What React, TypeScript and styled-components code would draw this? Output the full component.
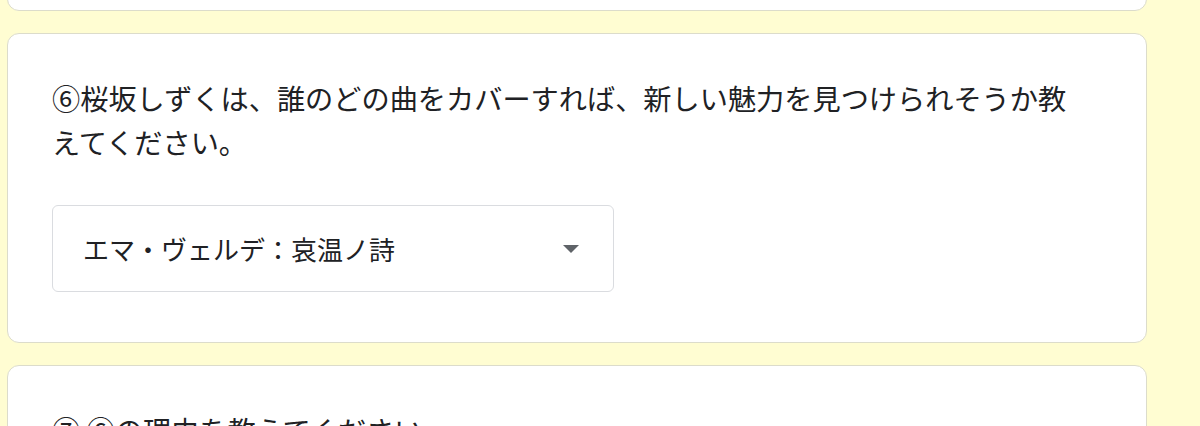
import React from 'react';
import styled, { createGlobalStyle } from 'styled-components';

const GlobalStyle = createGlobalStyle`
  html, body {
    margin: 0;
    padding: 0;
    background: #fffdd2;
  }
  body {
    font-family: "Noto Sans CJK JP", "Noto Sans", sans-serif;
    color: #202124;
    overflow: hidden;
  }
`;

const Page = styled.div`
  display: flex;
  flex-direction: column;
  gap: 22px;
  width: 1140px;
  margin: -39px 0 0 7px;
`;

const Card = styled.div<{ $stub?: boolean }>`
  background: #ffffff;
  border: 1px solid #dcdccb;
  border-radius: 12px;
  padding: ${p => (p.$stub ? '0' : '42px 56px 50px 44px')};
  height: ${p => (p.$stub ? '50px' : 'auto')};
  box-sizing: border-box;
`;

const Question = styled.div`
  font-size: 28.2px;
  line-height: 44px;
`;

const Select = styled.div`
  margin-top: 41px;
  width: 562px;
  height: 87px;
  box-sizing: border-box;
  border: 1px solid #dadce0;
  border-radius: 6px;
  display: flex;
  align-items: center;
  justify-content: space-between;
  padding: 0 34px 0 30px;
`;

const SelectText = styled.span`
  font-size: 26px;
  color: #202124;
`;

const Arrow = styled.span`
  width: 0;
  height: 0;
  border-left: 8.5px solid transparent;
  border-right: 8.5px solid transparent;
  border-top: 8.5px solid #5f6368;
`;

export default function App() {
  return (
    <>
      <GlobalStyle />
      <Page>
        <Card $stub />
        <Card>
          <Question>
            ⑥桜坂しずくは、誰のどの曲をカバーすれば、新しい魅力を見つけられそうか教えてください。
          </Question>
          <Select>
            <SelectText>エマ・ヴェルデ：哀温ノ詩</SelectText>
            <Arrow />
          </Select>
        </Card>
        <Card>
          <Question>⑦ ⑥の理由を教えてください。</Question>
        </Card>
      </Page>
    </>
  );
}
